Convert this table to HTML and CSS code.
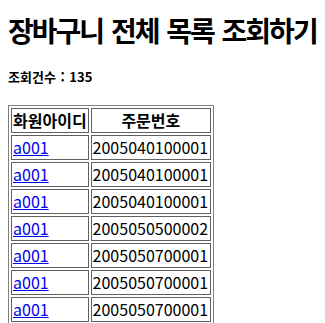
FILE: index.html
```html
<!DOCTYPE html>
<html lang="ko">
<head>
  <meta charset="UTF-8">
  <title>장바구니 전체 목록 조회하기</title>
  <link rel="stylesheet" href="styles.css">
</head>
<body>
  <h1>장바구니 전체 목록 조회하기</h1>
  <h4 class="count">조회건수 : 135</h4>
  <table class="cart-list">
    <tr>
      <th>화원아이디</th>
      <th>주문번호</th>
    </tr>
    <tr><td><a href="#">a001</a></td><td>2005040100001</td></tr>
    <tr><td><a href="#">a001</a></td><td>2005040100001</td></tr>
    <tr><td><a href="#">a001</a></td><td>2005040100001</td></tr>
    <tr><td><a href="#">a001</a></td><td>2005050500002</td></tr>
    <tr><td><a href="#">a001</a></td><td>2005050700001</td></tr>
    <tr><td><a href="#">a001</a></td><td>2005050700001</td></tr>
    <tr><td><a href="#">a001</a></td><td>2005050700001</td></tr>
    <tr><td><a href="#">a001</a></td><td>2005050700001</td></tr>
    <tr><td><a href="#">a001</a></td><td>2005051000001</td></tr>
  </table>
</body>
</html>
```

FILE: styles.css
```css
body {
  margin: 0 8px;
  font-family: "Noto Sans CJK KR", "Noto Sans", sans-serif;
  color: #000;
}
h1 {
  font-size: 28px;
  letter-spacing: -2px;
  word-spacing: 2px;
  line-height: 40px;
  white-space: nowrap;
  margin: 10px 0 0;
}
.count {
  font-size: 13px;
  line-height: 18px;
  word-spacing: 1px;
  margin: 18px 0 0;
}
.cart-list {
  margin-top: 19px;
  border: 1px solid #808080;
  border-spacing: 2px;
  font-size: 16px;
  line-height: 21px;
}
.cart-list th,
.cart-list td {
  border: 1px solid #606060;
  padding: 1px;
}
.cart-list td:last-child {
  padding-right: 2px;
}
.cart-list a {
  color: #0000ee;
}
```
